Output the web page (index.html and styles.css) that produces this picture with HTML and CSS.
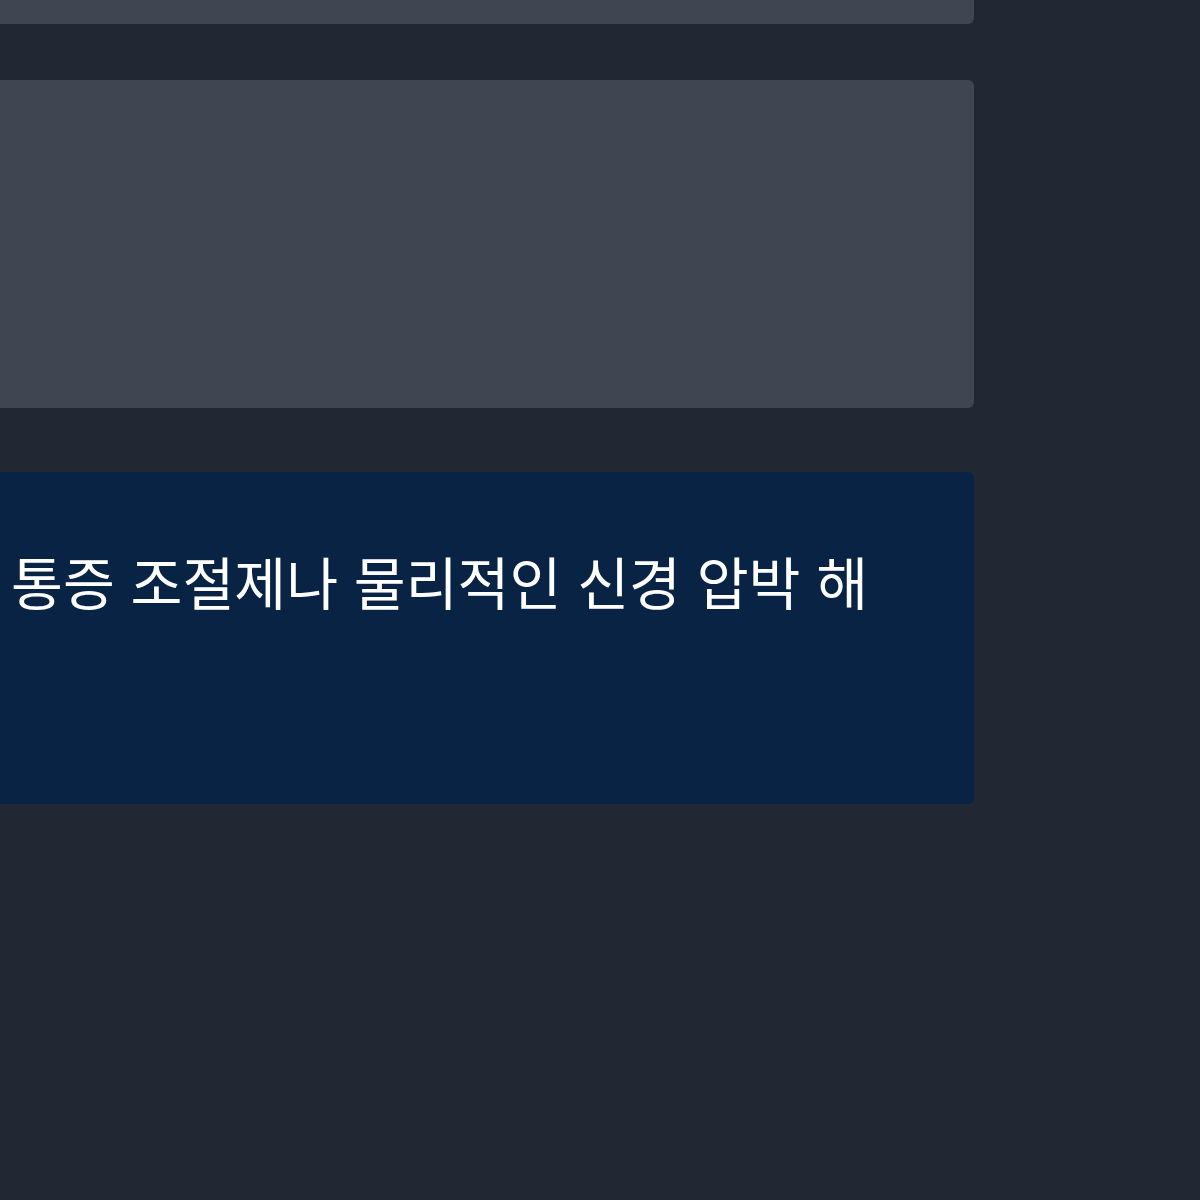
FILE: index.html
```html
<!DOCTYPE html>
<html lang="ko">
<head>
    <meta charset="UTF-8">
    <title>카드</title>
    <link rel="stylesheet" href="styles.css">
</head>
<body>
    <div class="stack">
        <div class="card card-top"></div>
        <div class="card card-grey"></div>
        <div class="card card-blue">
            <p class="card-text">통증 조절제나 물리적인 신경 압박 해</p>
        </div>
    </div>
</body>
</html>
```
FILE: styles.css
```css
html, body {
    margin: 0;
    padding: 0;
    background: #212733;
}
body {
    font-family: "Noto Sans CJK KR", "Noto Sans", sans-serif;
    height: 1200px;
    overflow: hidden;
}
.stack {
    display: flex;
    flex-direction: column;
    margin-left: -40px;
    width: 1014px;
}
.card {
    border-radius: 6px;
    box-sizing: border-box;
}
.card-top {
    height: 64px;
    margin-top: -40px;
    background: #3f4551;
}
.card-grey {
    height: 328px;
    margin-top: 56px;
    background: #3f4551;
}
.card-blue {
    height: 332px;
    margin-top: 64px;
    background: #082344;
    padding: 0 0 0 51px;
}
.card-text {
    margin: 73px 0 0;
    font-size: 56.4px;
    line-height: 72px;
    color: #ffffff;
    white-space: nowrap;
}
```
